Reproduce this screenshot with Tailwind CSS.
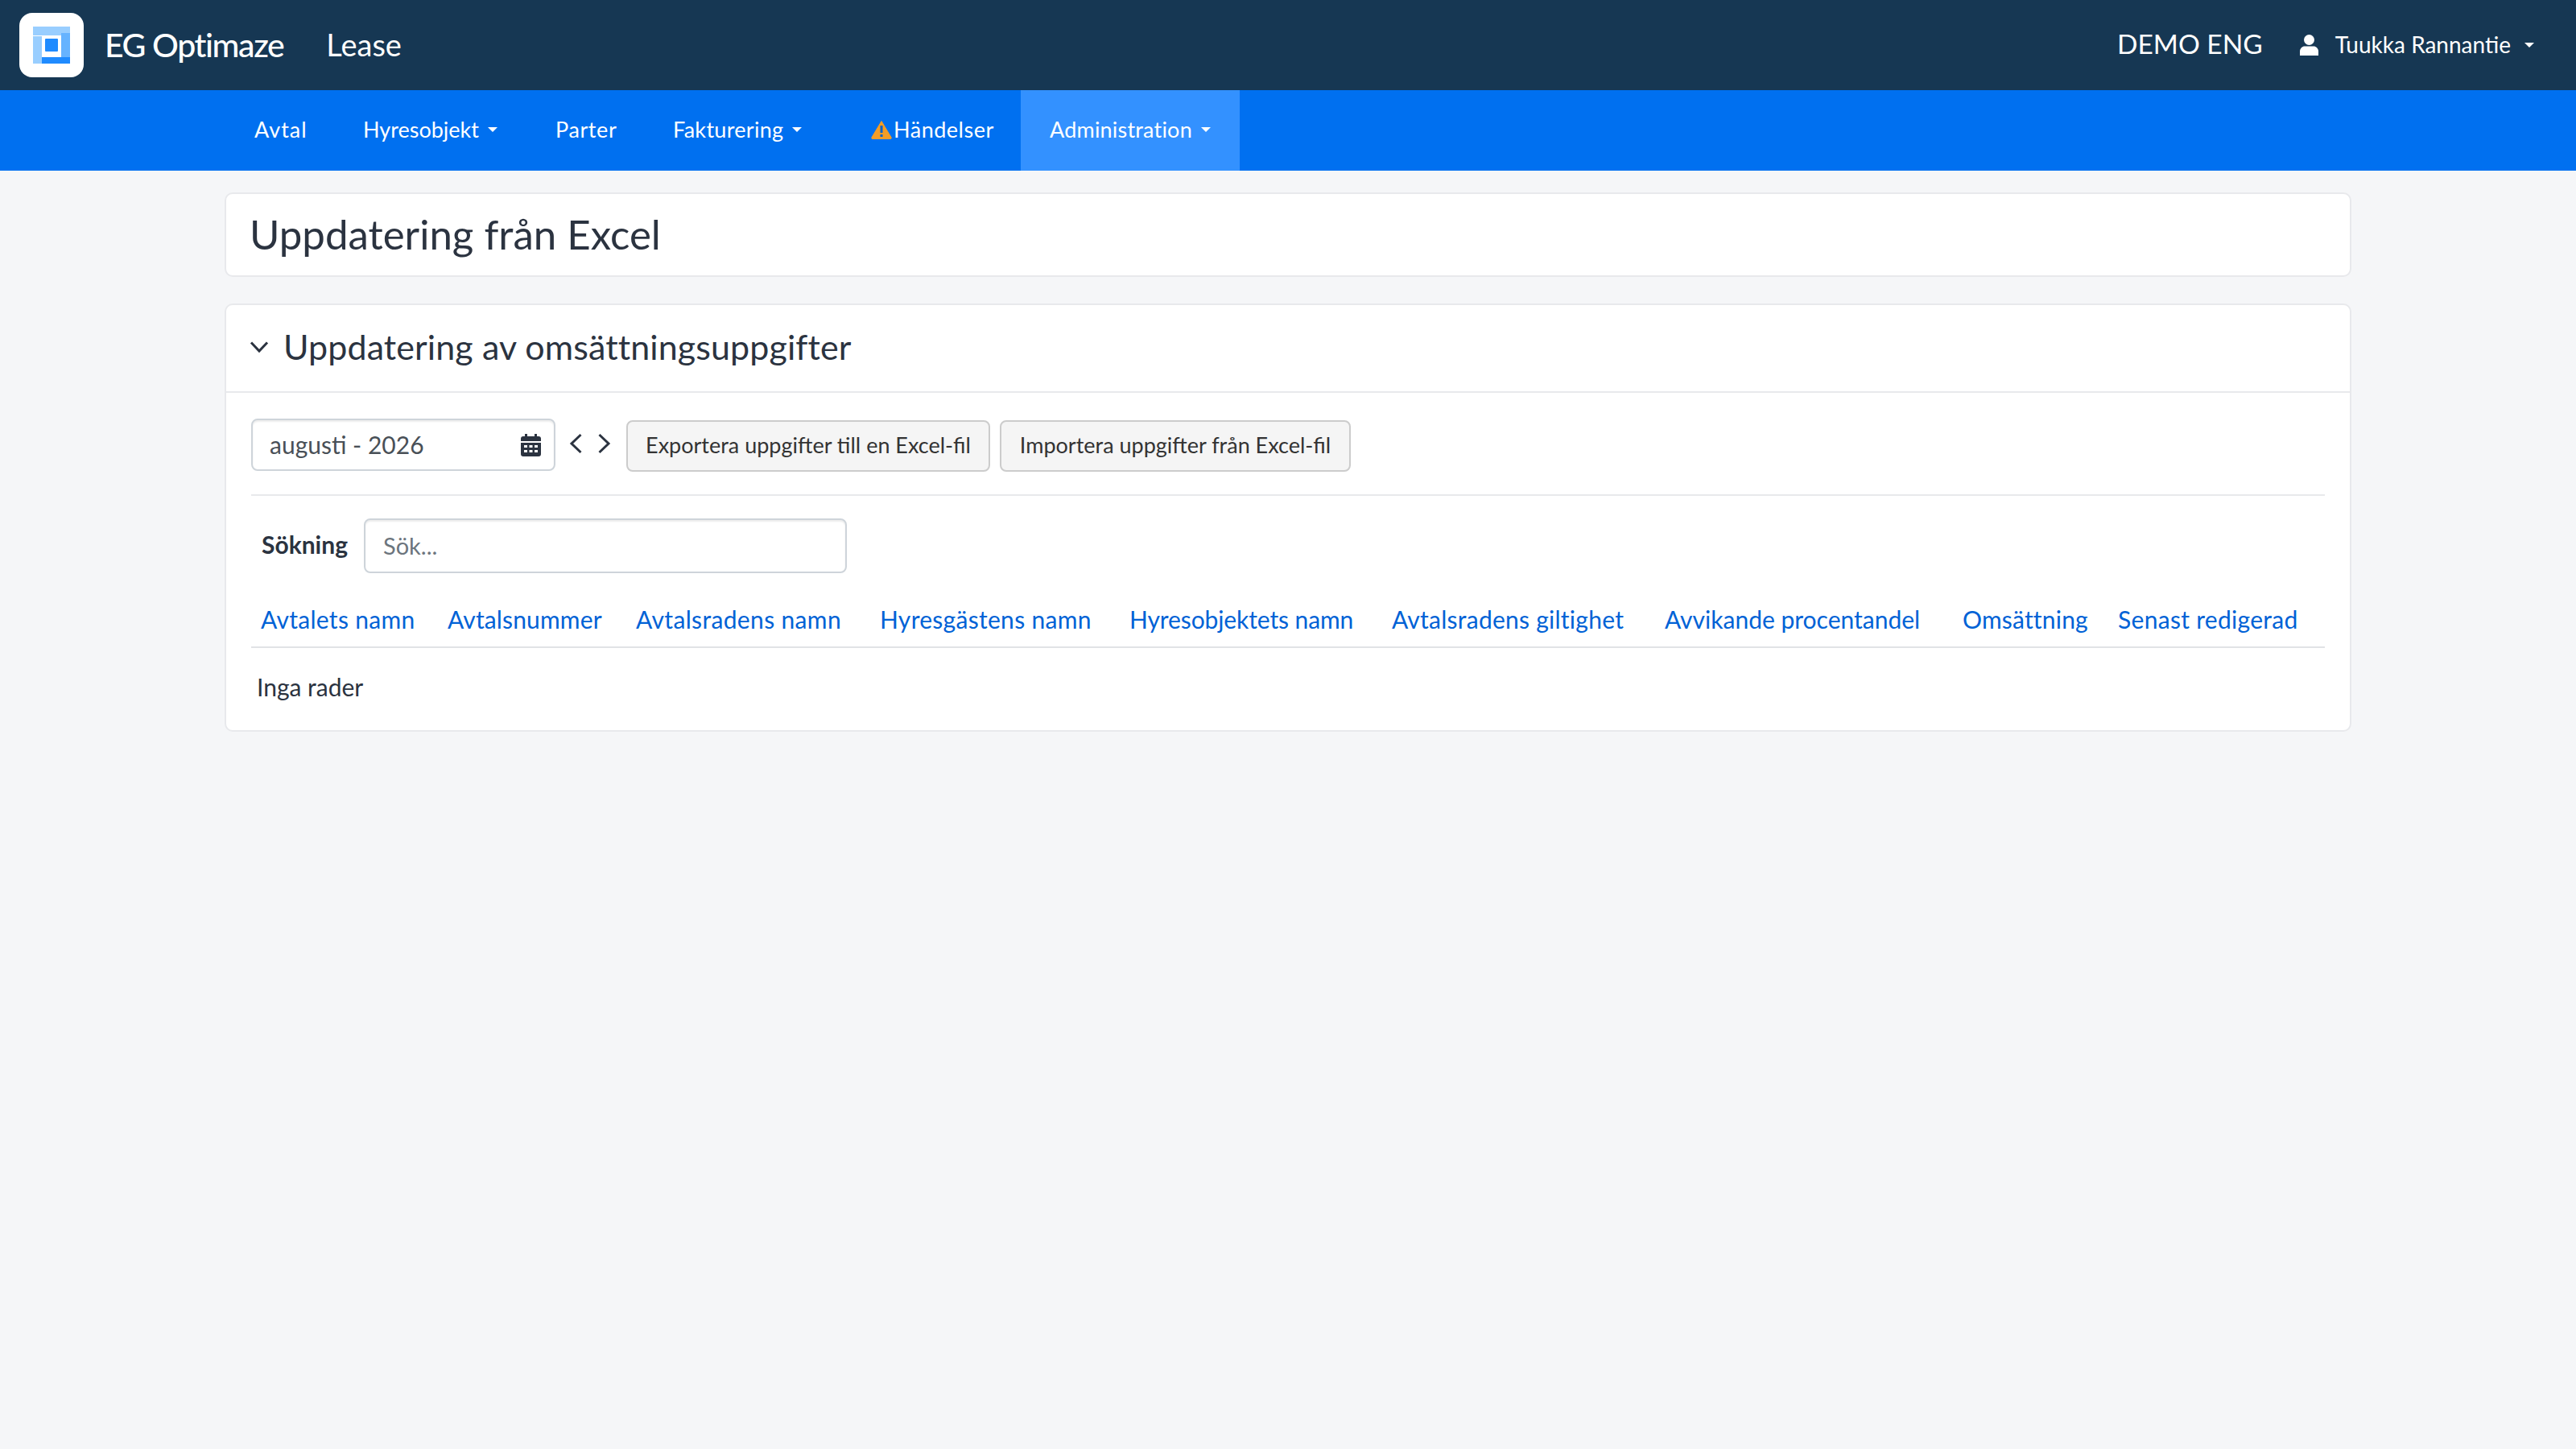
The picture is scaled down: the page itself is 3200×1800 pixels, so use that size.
<!DOCTYPE html>
<html lang="sv">
<head>
    <meta charset="UTF-8">
    <title>Uppdatering från Excel - EG Optimaze Lease</title>
    <script src="https://cdn.jsdelivr.net/npm/@tailwindcss/browser@4"></script>
</head>
<body class="bg-[#f5f6f8] font-['Lato',sans-serif] text-[#2b3340] min-h-[1800px]">

    <!-- Top bar -->
    <header class="h-[112px] bg-[#163753] text-white flex items-center pl-[24px] pr-[52px]">
        <div class="w-[80px] h-[80px] bg-white rounded-[16px] flex items-center justify-center">
            <svg width="46" height="46" viewBox="0 0 46 46">
                <rect x="0" y="0" width="46" height="11" fill="#99ceff"/>
                <rect x="0" y="12" width="11" height="34" fill="#99ceff"/>
                <rect x="35" y="8" width="11" height="30" fill="#66b3ff"/>
                <rect x="11" y="38" width="35" height="8" fill="#1f8bff"/>
                <rect x="15" y="15" width="16" height="16" rx="1" fill="#1f8bff"/>
            </svg>
        </div>
        <div class="ml-[26px] pb-[2px] text-[41px] font-medium tracking-[-1.4px] leading-none">EG Optimaze</div>
        <div class="ml-[53px] pb-[2px] text-[38px] leading-none">Lease</div>
        <div class="ml-auto pb-[2px] text-[33.5px] leading-none">DEMO ENG</div>
        <svg class="ml-[46px]" width="23" height="26" viewBox="0 0 23 26" fill="#fff">
            <ellipse cx="11.5" cy="6.5" rx="6.5" ry="6.5"/>
            <path d="M0 26v-5c0-4 3-6.500 6-6.500h11c3 0 6 2.500 6 6.500v5z"/>
        </svg>
        <div class="ml-[21px] pb-[2px] text-[28px] leading-none">Tuukka Rannantie</div>
        <div class="ml-[17px] w-0 h-0 border-x-[6px] border-x-transparent border-t-[6px] border-t-white"></div>
    </header>

    <!-- Main nav -->
    <nav class="h-[100px] bg-[#0070f0] text-white text-[27px] flex pl-[280px]">
        <a class="w-[135px] pl-[36px] pb-[2px] flex items-center tracking-[1px]">Avtal</a>
        <a class="w-[239px] pl-[36px] pb-[2px] flex items-center">Hyresobjekt
            <span class="ml-[11px] w-0 h-0 border-x-[6px] border-x-transparent border-t-[6px] border-t-white"></span>
        </a>
        <a class="w-[146px] pl-[36px] pb-[2px] flex items-center tracking-[.6px]">Parter</a>
        <a class="w-[246px] pl-[36px] pb-[2px] flex items-center tracking-[.3px]">Fakturering
            <span class="ml-[11px] w-0 h-0 border-x-[6px] border-x-transparent border-t-[6px] border-t-white"></span>
        </a>
        <a class="w-[222px] pl-[36px] pb-[2px] flex items-center tracking-[.5px]">
            <svg class="mr-[2px]" width="26" height="24" viewBox="0 0 26 24">
                <path d="M13 1.500 25 21.500a1.500 1.500 0 0 1-1.300 2.300H2.300A1.500 1.500 0 0 1 1 21.500z" fill="#f49d25" stroke="#f49d25" stroke-linejoin="round"/>
                <rect x="11.500" y="7" width="3" height="9" fill="#0b63c8"/>
                <rect x="11.500" y="18" width="3" height="3" fill="#0b63c8"/>
            </svg>Händelser
        </a>
        <a class="w-[272px] pl-[36px] pb-[2px] flex items-center bg-[#3391ff] tracking-[.2px]">Administration
            <span class="ml-[11px] w-0 h-0 border-x-[6px] border-x-transparent border-t-[6px] border-t-white"></span>
        </a>
    </nav>

    <main class="w-[2642px] mx-auto pt-[27px]">
        <!-- Page title -->
        <div class="h-[105px] bg-white border-2 border-[#e8e9ec] rounded-[10px] flex items-center pl-[29px] text-[51px]">
            Uppdatering från Excel
        </div>

        <!-- Card -->
        <section class="mt-[33px] h-[532px] bg-white border-2 border-[#e8e9ec] rounded-[10px]">
            <div class="h-[109px] border-b-2 border-[#e8e9ec] flex items-center pl-[29px] pb-[3px] text-[43px] tracking-[.1px]">
                <svg width="24" height="16" viewBox="0 0 24 16" fill="none" stroke="#2b3340" stroke-width="3">
                    <path d="M2 2.500 12 13 22 2.500"/>
                </svg>
                <span class="ml-[18px]">Uppdatering av omsättningsuppgifter</span>
            </div>

            <div class="px-[31px]">
                <!-- Toolbar -->
                <div class="h-[128px] pt-[32px] border-b-2 border-[#e8e9ec] flex items-start">
                    <div class="w-[378px] h-[65px] border-2 border-[#ced4da] rounded-[8px] shadow-[inset_0_2px_2px_rgba(0,0,0,0.08)] flex items-center pl-[21px] pr-[16px] text-[30px] text-[#495057]">
                        <span>augusti - 2026</span>
                        <svg class="ml-auto" width="25" height="28" viewBox="0 0 25 28" fill="#2b3340">
                            <rect x="5" y="0" width="3" height="5"/>
                            <rect x="17" y="0" width="3" height="5"/>
                            <path d="M3 3h19a3 3 0 0 1 3 3v3H0V6a3 3 0 0 1 3-3z"/>
                            <path fill-rule="evenodd" d="M0 11h25v14a3 3 0 0 1-3 3H3a3 3 0 0 1-3-3zM4 14v3h4v-3zM10.500 14v3h4v-3zM17 14v3h4v-3zM4 20v3h4v-3zM10.500 20v3h4v-3zM17 20v3h4v-3z"/>
                        </svg>
                    </div>
                    <div class="ml-[17px] h-[62px] flex items-center">
                        <svg width="17" height="26" viewBox="0 0 17 26" fill="none" stroke="#2b3340" stroke-width="3"><path d="M14.500 2 3 13l11.500 11"/></svg>
                        <svg class="ml-[18px]" width="17" height="26" viewBox="0 0 17 26" fill="none" stroke="#2b3340" stroke-width="3"><path d="M2.500 2 14 13 2.500 24"/></svg>
                    </div>
                    <button class="ml-[19px] mt-[2px] w-[452px] h-[64px] bg-[#f5f5f5] border-2 border-[#cccccc] rounded-[8px] pb-[2px] text-[27px] text-[#333]">Exportera uppgifter till en Excel-fil</button>
                    <button class="ml-[12px] mt-[2px] w-[436px] h-[64px] bg-[#f5f5f5] border-2 border-[#cccccc] rounded-[8px] pb-[2px] text-[27px] text-[#333]">Importera uppgifter från Excel-fil</button>
                </div>

                <!-- Search -->
                <div class="mt-[28px] flex items-center">
                    <label class="ml-[13px] w-[127px] pb-[3px] text-[30px] font-bold">Sökning</label>
                    <input type="text" placeholder="Sök..." class="w-[600px] h-[68px] border-2 border-[#ced4da] rounded-[8px] shadow-[inset_0_2px_2px_rgba(0,0,0,0.08)] px-[22px] pb-[2px] text-[29px] placeholder:text-[#6c757d]">
                </div>

                <!-- Table -->
                <table class="mt-[26px] w-[2576px] table-fixed text-[30px]">
                    <thead class="text-[#0062d6] text-left">
                        <tr class="h-[66px] border-b-2 border-[#e1e3e6]">
                            <th class="w-[232px] pl-[12px] pb-[3px] font-normal tracking-[.3px]">Avtalets namn</th>
                            <th class="w-[234px] pl-[12px] pb-[3px] font-normal tracking-[.15px]">Avtalsnummer</th>
                            <th class="w-[303px] pl-[12px] pb-[3px] font-normal tracking-[.35px]">Avtalsradens namn</th>
                            <th class="w-[310px] pl-[12px] pb-[3px] font-normal tracking-[.3px]">Hyresgästens namn</th>
                            <th class="w-[326px] pl-[12px] pb-[3px] font-normal tracking-[-.1px]">Hyresobjektets namn</th>
                            <th class="w-[339px] pl-[12px] pb-[3px] font-normal tracking-[.25px]">Avtalsradens giltighet</th>
                            <th class="w-[370px] pl-[12px] pb-[3px] font-normal">Avvikande procentandel</th>
                            <th class="w-[193px] pl-[12px] pb-[3px] font-normal tracking-[.2px]">Omsättning</th>
                            <th class="w-[269px] pl-[12px] pb-[3px] font-normal tracking-[.3px]">Senast redigerad</th>
                        </tr>
                    </thead>
                </table>
                <div class="mt-[30px] ml-[7px] text-[30px] leading-[36px]">Inga rader</div>
            </div>
        </section>
    </main>
</body>
</html>
